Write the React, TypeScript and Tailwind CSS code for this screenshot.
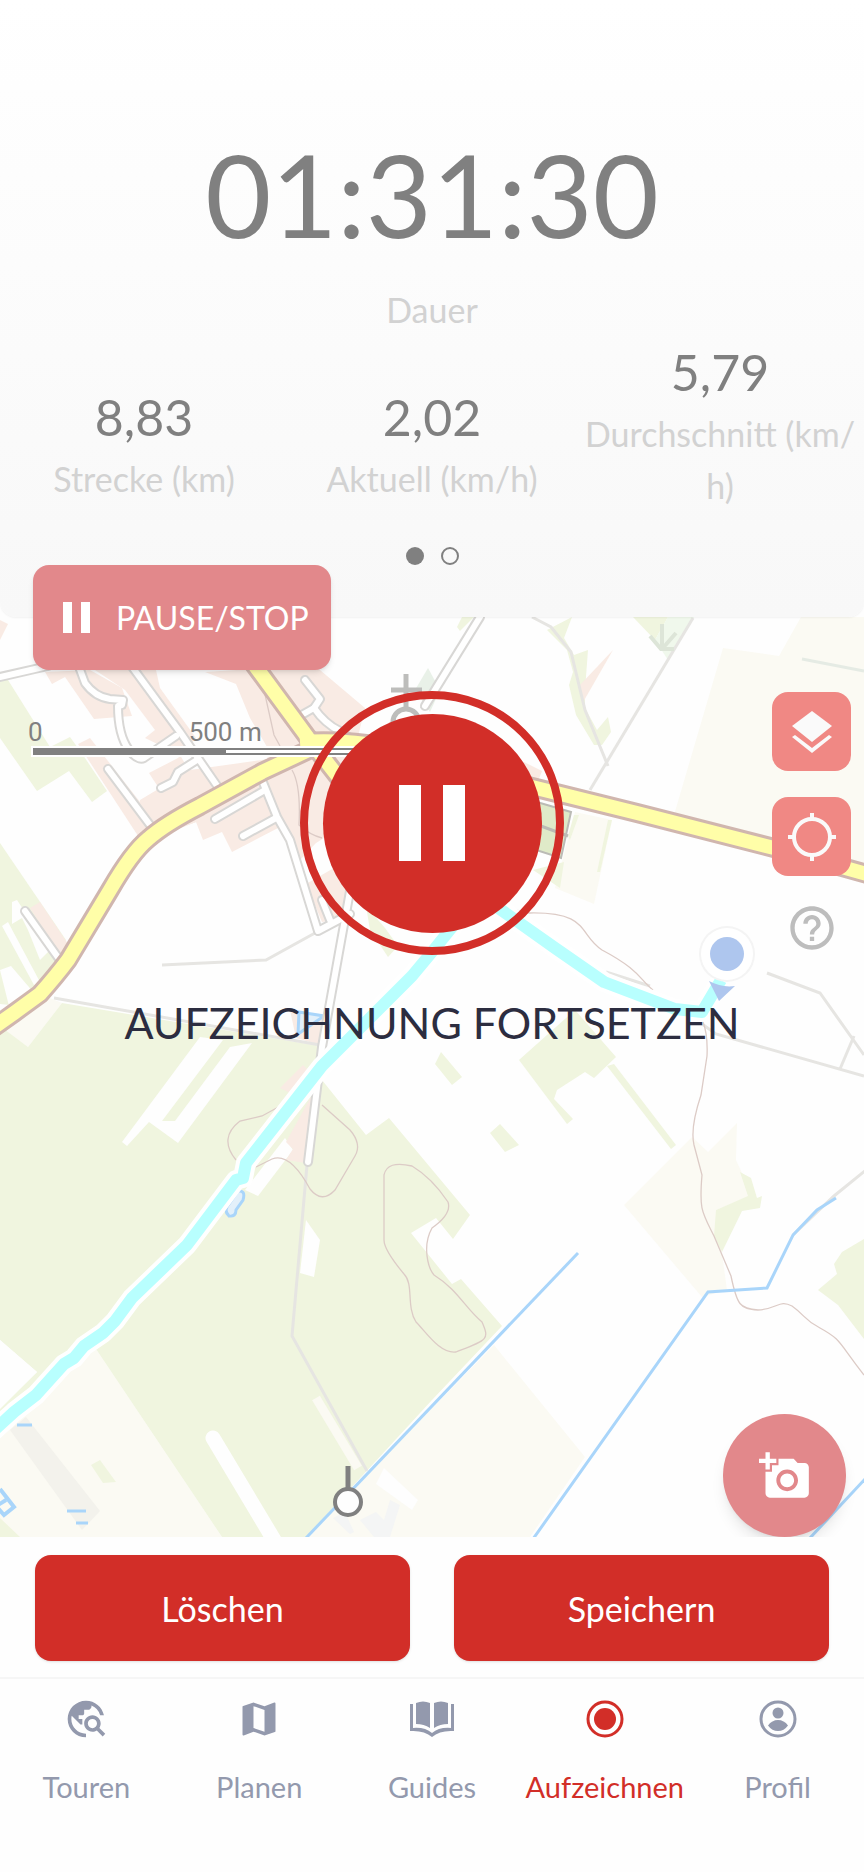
import { MdAddAPhoto, MdHelpOutline, MdMap, MdTravelExplore } from "react-icons/md";

const stats = [
  { value: "8,83", label: "Strecke (km)" },
  { value: "2,02", label: "Aktuell (km/h)" },
  { value: "5,79", label: "Durchschnitt (km/", rest: "h)" },
];

const roads = [
  "M0 677L48 666",
  "M78 664L85 683Q95 697 110 699L123 700L122 705L118 706Q118 735 129 750Q138 761 144 758L176 736",
  "M130 664L180 732L220 790",
  "M108 769L153 829",
  "M161 788L173 782L178 772L197 760",
  "M215 819L265 790",
  "M243 836L276 818",
  "M262 780L277 817L290 840L318 931L350 914",
  "M305 680L320 699L314 708L298 717",
  "M314 708Q325 724 340 731L375 755",
  "M25 911L62 963",
  "M322 900L330 920",
  "M352 880L322 1047L308 1162",
  "M480 617L425 706",
];

const yellowRoads = [
  "M-10 1030L14 1013L40 994Q56 976 68 960L110 890Q132 852 148 839Q165 824 200 806L262 772L313 748",
  "M250 659L308 738L350 792",
  "M300 742C390 736 440 764 520 784L637 813L774 848L874 876",
];

const tracks = [
  "M54 998L320 1045",
  "M162 965L266 960L315 933",
  "M307 1165L292 1336L367 1471",
  "M693 618L590 790",
  "M532 617L551 627L571 652L585 710L608 766",
  "M606 972L650 986",
  "M702 1024L716 1034L864 1076",
  "M767 973L820 993L864 1055",
  "M854 1036L840 1069",
  "M793 1235L834 1196L866 1170",
];

const contours = [
  "M284 1104L262 1116L240 1121Q218 1138 236 1160",
  "M322 1105L350 1130Q362 1144 355 1156L335 1190Q322 1204 310 1189Q290 1152 272 1159L256 1167",
  "M384 1240L384 1175Q387 1160 412 1166Q432 1178 448 1202Q452 1214 432 1228C422 1246 428 1268 434 1275C458 1290 465 1308 482 1322C490 1340 487 1340 456 1352C440 1354 426 1332 416 1322C406 1306 414 1284 404 1274Q384 1250 384 1240",
  "M506 905Q520 913 530 913C590 912 578 934 602 950C640 970 640 980 653 990",
  "M703 1022Q708 1035 707 1056L701 1095Q690 1128 694 1145L702 1175C699 1210 702 1212 714 1236L731 1276C737 1305 740 1309 758 1310C778 1309 779 1299 792 1306C806 1316 804 1320 820 1328C842 1340 838 1342 864 1375",
  "M264 690L274 735L280 746M292 770Q301 785 299 825Q310 835 322 838",
];

const rivers = [
  "M306 1538L578 1253",
  "M533 1539L708 1292L767 1288L793 1235L817 1210L836 1198",
  "M809 1539L866 1478",
];

const gpsTrack =
  "M-10 1434L14 1412L36 1395L64 1364L74 1358L84 1346L103 1333L115 1321L132 1298L187 1245L236 1180L243 1178L246 1163L322 1066L412 976L432 952L478 895L497 907L555 948L604 982L675 1009L702 1012L721 980";

function MapCanvas() {
  return (
    <svg
      className="absolute inset-0 h-full w-full"
      viewBox="0 601 864 936"
      preserveAspectRatio="xMidYMid slice"
      aria-hidden="true"
    >
      <rect y="601" width="864" height="936" fill="#fefefe" />

      {/* fields */}
      <g fill="#fbfaf3">
        <path d="M723 648L779 656L801 617H864V870L674 815Z" />
        <path d="M575 812L612 820L594 904L555 888Z" />
        <path d="M28 1047L4 1030L50 998L62 1003Z" />
        <path d="M96 1349L222 1537H0V1430Z" />
        <path d="M494 1345L585 1457L530 1537H306Z" />
        <path d="M624 1205L692 1137L708 1152L737 1123L736 1160L752 1195L716 1210L727 1290L702 1297Z" />
      </g>

      {/* woods */}
      <g fill="#f0f5df">
        <path d="M0 680H8L50 747L70 737L83 755L107 791L92 802L69 771L37 791L0 738Z" />
        <path d="M0 843L66 940L42 990L10 1005L0 1004Z" />
        <path d="M62 1003L320 1046L322 1080L366 1135L389 1118L470 1215L453 1239L436 1218L411 1233L452 1284L461 1279L502 1326L432 1400L306 1537H222L96 1349L0 1430V1409L37 1372L0 1340V1026L28 1047Z" />
        <path d="M575 1010L616 1057L594 1078L585 1072L557 1090L554 1099L573 1119L567 1124L519 1060Z" />
        <path d="M607 1066L614 1064L676 1145L671 1149Z" />
        <path d="M441 1052L462 1077L452 1085L435 1064Z" />
        <path d="M500 1124L519 1145L505 1152L490 1133Z" />
        <path d="M740 1172L751 1178L757 1198L762 1196L760 1208L742 1211L722 1252L714 1236L716 1210L748 1196Z" />
        <path d="M864 1239L842 1252L834 1264L837 1274L818 1290L838 1305L864 1339Z" />
        <path d="M633 617H668L655 640Z" />
        <path d="M547 630L572 617L564 638L574 655L588 650L585 690L585 708L597 730L608 717L611 732L602 745L594 745L576 715L569 685L573 672L567 650Z" />
        <path d="M462 617H474L460 631L457 627Z" />
        <path d="M533 870L564 862L560 888Z" />
        <path d="M366 906L385 928L398 946L388 957L370 930Z" />
        <path d="M574 815L579 815L570 840L568 836ZM608 820H612L600 872H597Z" />
        <path d="M91 1465L100 1460L116 1482L103 1483Z" />
        <path d="M0 1518L20 1537H0Z" />
      </g>
      <path d="M655 640L668 617H694L668 660Z" fill="#f0f8ec" />
      <path d="M415 690L428 668L440 690L430 712Z" fill="#e9f1e8" />

      {/* clearings */}
      <g fill="#fefefe">
        <path d="M200 1037L223 1040L162 1121H175L230 1047L252 1043L178 1143L149 1122L127 1146L122 1142Z" />
        <path d="M306 1220L320 1240L314 1277L300 1273Z" />
        <path d="M245 1190L285 1138L293 1150L258 1196Z" />
        <path d="M0 970L11 966L40 1000L10 1010ZM2 926L8 922L40 982L34 985ZM12 902L17 900L50 950L40 960L28 930L22 918L12 924Z" />
        <path d="M0 1340L37 1372L0 1408Z" />
      </g>
      <path d="M213 1438L277 1545" stroke="#fefefe" strokeWidth="15" strokeLinecap="round" />
      <path d="M316 1398L358 1468" stroke="#fbfaf3" strokeWidth="9" />

      {/* built-up areas */}
      <g fill="#f9ebe4">
        <path d="M0 620L8 624L0 640Z" />
        <path d="M45 672L52 684L65 677L94 719L132 716L122 688L90 670Z" />
        <path d="M95 670H156L160 688L196 738L178 758L149 773L160 790L176 798L140 802L90 738L78 744L142 842L215 815L180 755L145 738L155 730L125 690Z" />
        <path d="M140 800L190 770L262 760L320 750L324 838L316 843L300 825L278 828L232 852L222 832L203 840L196 822L155 838L138 838Z" />
        <path d="M205 672L237 670H320L365 708L350 770L316 843L300 860L262 770L270 752L250 718L236 684Z" />
        <path d="M306 884L348 860L352 900L335 920L322 922Z" />
        <path d="M30 908L40 902L68 944L60 955Z" />
        <path d="M290 1010L325 1015L320 1045L296 1038Z" />
        <path d="M280 1088L303 1065L313 1075L294 1095Z" />
        <path d="M286 1142L312 1095L318 1098L306 1163L286 1160L293 1149Z" />
        <path d="M613 650L582 704L580 685Z" />
        <path d="M524 762L542 771L537 784L524 780Z" />
      </g>
      <path d="M530 800L571 812L561 858L530 848Z" fill="#dfeac8" stroke="#bbbbb5" strokeWidth="2" />
      <path d="M530 822L568 836" stroke="#bbbbb5" strokeWidth="3" />
      <path d="M10 1430L26 1417L100 1511L82 1530Z" fill="#f3f2ec" />
      <path d="M384 1468L418 1500L412 1510L376 1484Z" fill="#fefefe" />
      <path d="M333 1518L345 1512L354 1532L350 1534ZM360 1520L376 1512L384 1520L390 1500L400 1505L390 1537H374Z" fill="#f4f5f5" />

      <g fill="none" stroke="#e6e5e2" strokeWidth="3">
        {tracks.map((d) => (
          <path key={d} d={d} />
        ))}
      </g>
      <path d="M802 659L864 671" stroke="#e5ebe4" strokeWidth="3" />
      <g fill="none" stroke="#dccbc6" strokeWidth="1.3">
        {contours.map((d) => (
          <path key={d} d={d} />
        ))}
      </g>
      <g fill="none" stroke="#a9d5fa" strokeWidth="3">
        {rivers.map((d) => (
          <path key={d} d={d} />
        ))}
        <path d="M17 1425H32M67 1511H86M76 1523H88" />
        <path d="M0 1489L14 1507L4 1515L-4 1506M-2 1505L6 1500" strokeWidth="4" />
        <path d="M299 1012L324 1016L298 1034Z" fill="#e3f0fa" />
        <path d="M238 1191Q246 1190 243 1200L236 1210Q236 1217 229 1216Q223 1210 229 1204Z" fill="#e3f0fa" />
      </g>

      {/* streets: casings first, then fills */}
      <g fill="none" stroke="#d8d7d5" strokeWidth="10" strokeLinecap="round" strokeLinejoin="round">
        {roads.map((d) => (
          <path key={d} d={d} />
        ))}
      </g>
      <g fill="none" stroke="#ffffff" strokeWidth="6" strokeLinecap="round" strokeLinejoin="round">
        {roads.map((d) => (
          <path key={d} d={d} />
        ))}
      </g>
      <g fill="none" stroke="#d0b6ae" strokeWidth="20">
        {yellowRoads.map((d) => (
          <path key={d} d={d} />
        ))}
      </g>
      <g fill="none" stroke="#fffea8" strokeWidth="14">
        {yellowRoads.map((d) => (
          <path key={d} d={d} />
        ))}
      </g>

      {/* recorded track */}
      <g fill="none" strokeLinejoin="round">
        <path d={gpsTrack} stroke="#ffffff" strokeWidth="20" />
        <path d={gpsTrack} stroke="#b8fffe" strokeWidth="12" />
      </g>

      {/* mill symbols */}
      <g fill="none" stroke="#bdbdbb" strokeWidth="5">
        <path d="M406 674V708M391 690H422" />
        <circle cx="406" cy="722" r="13" />
      </g>
      <path d="M662 624V649M650 636L661 649H674M662 649L676 633" fill="none" stroke="#dde5d8" strokeWidth="4" />
      <path d="M348 1466V1490" stroke="#808080" strokeWidth="5" />
      <circle cx="348" cy="1502" r="13" fill="#fefefe" stroke="#808080" strokeWidth="4" />

      {/* current position */}
      <circle cx="727" cy="954" r="28" fill="#f4f4f4" />
      <circle cx="727" cy="954" r="26" fill="#ffffff" />
      <circle cx="727" cy="954" r="17" fill="#aec6ee" />
      <path d="M709 981Q722 988 735 986L719 1001Z" fill="#aec6ee" />
    </svg>
  );
}

function LayersIcon() {
  return (
    <svg viewBox="0 0 40 42" className="h-[42px] w-10" fill="#fafafa">
      <path d="M20 0L40 15L20 31L0 15Z" />
      <path d="M0 26L3 24L20 37L37 24L40 26L20 42Z" />
    </svg>
  );
}

function LocateIcon() {
  return (
    <svg viewBox="0 0 48 48" className="size-12" fill="none" stroke="#fafafa" strokeWidth="4">
      <circle cx="24" cy="24" r="18" />
      <path d="M24 0V6M24 42V48M0 24H6M42 24H48" />
    </svg>
  );
}

function GuidesIcon() {
  return (
    <svg viewBox="0 0 46 36" className="h-9 w-[46px]" fill="currentColor">
      <path d="M7 2Q14 -1 21 2V27Q15 23 7 23Z" />
      <path d="M39 2Q32 -1 25 2V27Q31 23 39 23Z" />
      <path d="M1 3H4V27Q16 26 23 32Q30 26 42 27V3H45V30Q31 29 23 36Q15 29 1 30Z" />
    </svg>
  );
}

function RecordIcon() {
  return (
    <svg viewBox="0 0 38 38" className="size-[38px]">
      <circle cx="19" cy="19" r="17" fill="none" stroke="currentColor" strokeWidth="3" />
      <circle cx="19" cy="19" r="11" fill="currentColor" />
    </svg>
  );
}

function ProfileIcon() {
  return (
    <svg viewBox="0 0 38 38" className="size-[38px]" fill="currentColor">
      <circle cx="19" cy="19" r="17" fill="none" stroke="currentColor" strokeWidth="3" />
      <circle cx="19" cy="13" r="5.5" />
      <path d="M9 25.500Q13 20 19 20T29 25.500Q25 31 19 31T9 25.500Z" />
    </svg>
  );
}

const tabs = [
  { label: "Touren", icon: <MdTravelExplore className="size-11" /> },
  { label: "Planen", icon: <MdMap className="size-11" /> },
  { label: "Guides", icon: <GuidesIcon /> },
  { label: "Aufzeichnen", icon: <RecordIcon />, active: true },
  { label: "Profil", icon: <ProfileIcon /> },
];

export default function App() {
  return (
    <div className="flex min-h-screen flex-col bg-[#fefefe] font-[Lato,sans-serif]">
      <header className="relative z-10 flex flex-col items-center rounded-b-2xl bg-linear-to-b from-white to-[#f8f8f8] pt-[126px] pb-[52px] shadow-xs">
        <div className="text-[114px] leading-[136px] text-[#808080]">01:31:30</div>
        <div className="mt-[22px] text-[34px] leading-[52px] text-[#d2d2d2]">Dauer</div>
        <div className="grid w-full grid-cols-3 items-end text-center">
          {stats.map((stat) => (
            <div key={stat.label} className={stat.rest ? "px-1" : "px-1 pb-[7px]"}>
              <div className="text-[50px] leading-[72px] text-[#808080]">{stat.value}</div>
              <div className="text-[34px] leading-[52px] text-[#d2d2d2]">
                {stat.label}
                {stat.rest && <wbr />}
                {stat.rest}
              </div>
            </div>
          ))}
        </div>
        <div className="mt-[35px] flex gap-[17px]">
          <span className="size-[18px] rounded-full bg-[#808080]" />
          <span className="size-[18px] rounded-full border-2 border-[#808080]" />
        </div>
      </header>

      <main className="relative -mt-4 flex min-h-[920px] flex-1 flex-col">
        <MapCanvas />

        <button className="relative z-20 -mt-9 ml-[33px] flex h-[105px] w-[298px] items-center gap-[26px] rounded-2xl bg-[#e2888b] pl-[30px] text-[32px] text-white shadow-md">
          <svg viewBox="0 0 27 31" className="h-[31px] w-[27px]" fill="currentColor">
            <path d="M0 0H9V31H0ZM18 0H27V31H18Z" />
          </svg>
          PAUSE/STOP
        </button>

        <div className="relative flex items-start justify-between pr-[13px]">
          <div className="mt-12 ml-7 font-[Roboto,sans-serif] text-[26px] leading-7 text-[#808080]">
            <div className="flex gap-[146px]">
              <span>0</span>
              <span>500 m</span>
            </div>
            <div className="mt-0.5 ml-[5px] flex h-[7px] w-[385px] outline-2 outline-white">
              <div className="w-1/2 bg-[#808080]" />
              <div className="w-1/2 border-y-2 border-[#808080] bg-white" />
            </div>
          </div>
          <div className="mt-[22px] flex flex-col items-center gap-[26px]">
            <button aria-label="Kartenebenen" className="flex size-[79px] items-center justify-center rounded-2xl bg-[#f08884]">
              <LayersIcon />
            </button>
            <button aria-label="Standort" className="flex size-[79px] items-center justify-center rounded-2xl bg-[#f08884]">
              <LocateIcon />
            </button>
            <button aria-label="Hilfe" className="text-[#bdbdbd]">
              <MdHelpOutline className="size-[52px]" />
            </button>
          </div>
        </div>

        <div className="absolute inset-x-0 top-[90px] flex flex-col items-center">
          <button
            aria-label="Aufzeichnung fortsetzen"
            className="flex size-[264px] items-center justify-center rounded-full border-8 border-[#d22e28]"
          >
            <span className="flex size-[219px] items-center justify-center gap-[22px] rounded-full bg-[#d22e28]">
              <span className="h-[76px] w-[22px] bg-white" />
              <span className="h-[76px] w-[22px] bg-white" />
            </span>
          </button>
          <p className="mt-10 text-[43px] leading-[56px] text-[#2c2d40]">AUFZEICHNUNG FORTSETZEN</p>
        </div>

        <button
          aria-label="Foto hinzufügen"
          className="relative mt-auto mr-[18px] flex size-[123px] items-center justify-center self-end rounded-full bg-[#e2888b] text-white shadow-lg"
        >
          <MdAddAPhoto className="size-[52px]" />
        </button>
      </main>

      <div className="relative grid grid-cols-2 gap-11 bg-[#fefefe] px-[35px] pt-[18px] pb-4">
        <button className="h-[106px] rounded-2xl bg-[#d22e28] text-[34px] text-white shadow-sm">Löschen</button>
        <button className="h-[106px] rounded-2xl bg-[#d22e28] text-[34px] text-white shadow-sm">Speichern</button>
      </div>

      <nav className="grid grid-cols-5 border-t-2 border-[#f6f6f6] bg-[#fefefe] pt-4 pb-[65px]">
        {tabs.map((tab) => (
          <a
            key={tab.label}
            href="#"
            className={
              tab.active
                ? "flex flex-col items-center gap-6 text-[29px] leading-10 text-[#d22e28]"
                : "flex flex-col items-center gap-6 text-[29px] leading-10 text-[#9399ad]"
            }
          >
            <span className="flex h-12 items-center">{tab.icon}</span>
            {tab.label}
          </a>
        ))}
      </nav>
    </div>
  );
}
